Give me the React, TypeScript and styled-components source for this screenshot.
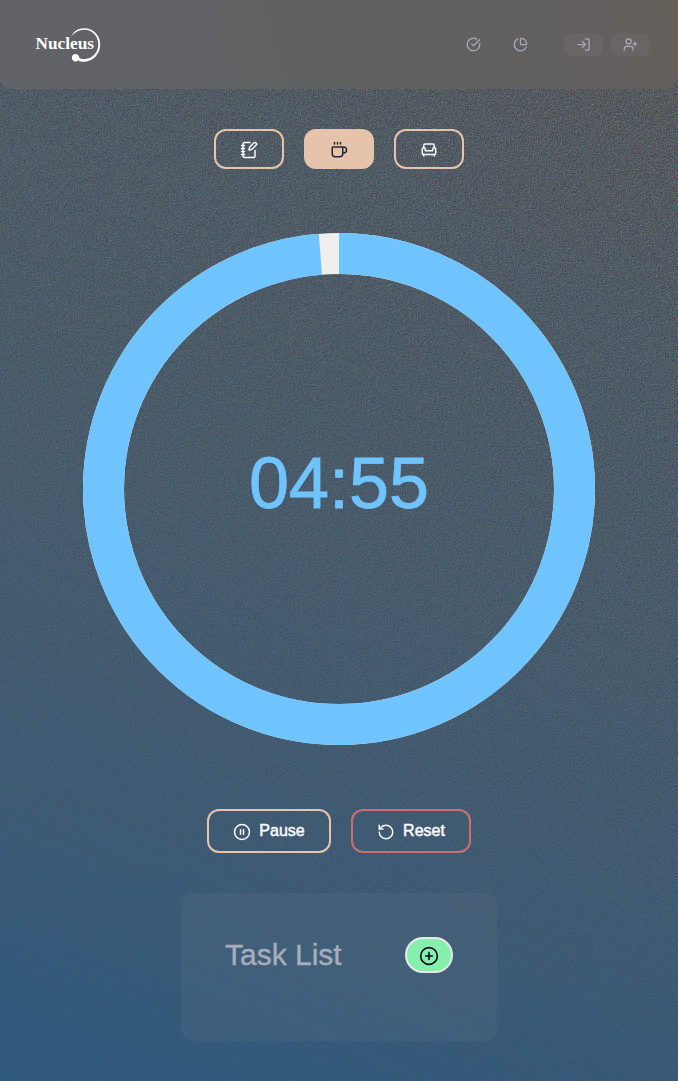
import React from "react";
import styled, { createGlobalStyle } from "styled-components";
import {
  Armchair, ChartPie, CircleCheckBig, CirclePause, CirclePlus,
  Coffee, LogIn, NotebookPen, RotateCcw, UserPlus,
} from "lucide-react";

const GlobalStyle = createGlobalStyle`
  *, *::before, *::after { box-sizing: border-box; }
  body { margin: 0; font-family: "Liberation Sans", Arial, sans-serif; background: #41586d; }
  button { font-family: inherit; padding: 0; cursor: pointer; }
`;

const Page = styled.div`
  position: relative;
  isolation: isolate;
  min-height: 100vh;
  overflow: hidden;
  display: flex;
  flex-direction: column;
  align-items: center;
  background:
    radial-gradient(circle at 100% 0%, rgba(112, 92, 76, 0.25), transparent 330px),
    linear-gradient(14deg, #2f5a7f 0%, #3d5c77 25%, #4a5f70 58%, #58626a 100%);
`;

const Grain = styled.svg`
  position: absolute;
  inset: 0;
  z-index: -1;
  width: 100%;
  height: 100%;
`;

const Header = styled.header`
  align-self: stretch;
  height: 89px;
  padding: 0 28px 0 30px;
  display: flex;
  align-items: center;
  justify-content: space-between;
  border-radius: 0 0 12px 12px;
  background: linear-gradient(75deg, #616368 0%, #616161 60%, #625f5d 92%, #665f5a 100%);
`;

const Logo = styled.svg`
  width: 76px;
  height: 44px;
  fill: #fff;
`;

const Nav = styled.nav`
  display: flex;
  align-items: center;
  color: #a5acbd;
`;

const NavLink = styled.a`
  display: flex;
  width: 47px;
  justify-content: center;
`;

const AuthButton = styled.button<{ $gap: number }>`
  display: flex;
  align-items: center;
  justify-content: center;
  width: 39px;
  height: 23px;
  margin-left: ${(p) => p.$gap}px;
  border: 0;
  border-radius: 8px;
  background: #6b6464;
  color: inherit;
`;

const Modes = styled.div`
  display: flex;
  gap: 20px;
  margin-top: 40px;
`;

const ModeButton = styled.button<{ $active?: boolean }>`
  display: flex;
  align-items: center;
  justify-content: center;
  width: 70px;
  height: 40px;
  padding-top: 1px;
  border: 2px solid #e6c4ab;
  border-radius: 12px;
  background: ${(p) => (p.$active ? "#e6c4ab" : "transparent")};
  color: ${(p) => (p.$active ? "#1f2937" : "#f9fafb")};
`;

const Timer = styled.div`
  display: grid;
  place-items: center;
  width: 512px;
  height: 512px;
  margin-top: 64px;
  > * { grid-area: 1 / 1; }
`;

const Time = styled.span`
  font-size: 72px;
  line-height: 72px;
  color: #6fc4ff;
  padding-bottom: 12px;
  -webkit-text-stroke: 0.8px currentColor;
`;

const Controls = styled.div`
  display: flex;
  gap: 20px;
  margin-top: 64px;
`;

const ControlButton = styled.button<{ $color: string; $width: number }>`
  display: flex;
  align-items: center;
  justify-content: center;
  gap: 8px;
  width: ${(p) => p.$width}px;
  height: 44px;
  border: 2px solid ${(p) => p.$color};
  border-radius: 12px;
  background: transparent;
  color: #f9fafb;
  font-size: 16px;
  line-height: 24px;
  -webkit-text-stroke: 0.5px currentColor;
  svg { margin-top: 2px; }
`;

const TaskCard = styled.section`
  display: flex;
  align-items: flex-start;
  justify-content: space-between;
  width: 316px;
  height: 148px;
  margin: 40px 0;
  padding: 44px;
  border-radius: 12px;
  background: rgba(112, 128, 144, 0.15);
`;

const TaskTitle = styled.h2`
  margin: 0;
  font-size: 30px;
  line-height: 36px;
  font-weight: 400;
  color: #a7adbd;
  -webkit-text-stroke: 0.4px currentColor;
`;

const AddButton = styled.button`
  display: flex;
  align-items: center;
  justify-content: center;
  width: 48px;
  height: 36px;
  padding-top: 2px;
  border: 2px solid #e5e7eb;
  border-radius: 18px;
  background: #86efac;
  color: #03101c;
`;

function Background() {
  return (
    <Grain aria-hidden="true">
      <defs>
        <filter id="grain" x="0" y="0" width="100%" height="100%" colorInterpolationFilters="sRGB">
          <feTurbulence type="fractalNoise" baseFrequency="0.75" numOctaves={3} />
          <feColorMatrix
            type="matrix"
            values="1.2 0.25 0.25 0 -0.54  0.25 1.2 0.25 0 -0.54  0.25 0.25 1.2 0 -0.53  0 0 0 0 1"
          />
        </filter>
        <linearGradient id="fade" x1="0.2" y1="1" x2="0.5" y2="0">
          <stop offset="0" stopColor="#fff" stopOpacity="0.02" />
          <stop offset="0.3" stopColor="#fff" stopOpacity="0.12" />
          <stop offset="0.65" stopColor="#fff" stopOpacity="0.24" />
          <stop offset="1" stopColor="#fff" stopOpacity="0.36" />
        </linearGradient>
        <mask id="grainMask" style={{ maskType: "alpha" }}>
          <rect width="110%" height="100%" fill="url(#fade)" />
        </mask>
      </defs>
      <g mask="url(#grainMask)">
        <rect width="110%" height="100%" filter="url(#grain)" />
      </g>
    </Grain>
  );
}

function NucleusLogo() {
  return (
    <Logo viewBox="0 0 76 44" role="img" aria-label="Nucleus">
      <text
        x="5.5" y="25.5" textLength="58.5" lengthAdjust="spacingAndGlyphs"
        fontFamily="Liberation Serif, serif" fontWeight="700" fontSize="17.5"
      >
        Nucleus
      </text>
      <path d="M41.5 13C44 8 48.500 5.300 54 5.300C63.500 5.300 70.200 12.500 70.200 21.500C70.200 31.500 62.500 38.800 53.500 38.800C51 38.800 49.500 38.300 48.300 37.200C47.500 38.100 46.500 38.500 45.500 38.500C43.300 38.500 41.800 36.800 41.800 34.800C41.800 32.500 43.500 31 45.500 31C47.500 31 49 32.400 49.200 34.500C50.500 35.900 52.500 36.300 55 36C62.500 35.500 68.300 29.500 68.300 21.500C68.300 13 62.500 6.700 54 6.700C49 6.700 45 9 41.500 13Z" />
    </Logo>
  );
}

function Ring() {
  const length = 2 * Math.PI * 235.5;
  const remaining = 0.987;
  return (
    <svg width="512" height="512" viewBox="0 0 512 512" fill="none" strokeWidth="41">
      <circle cx="256" cy="256" r="235.5" stroke="#f1efed" />
      <circle
        cx="256" cy="256" r="235.5" stroke="#6fc4ff"
        strokeDasharray={`${length * remaining} ${length}`}
        transform="rotate(-90 256 256)"
      />
    </svg>
  );
}

export default function App() {
  return (
    <>
      <GlobalStyle />
      <Page>
        <Background />
        <Header>
          <NucleusLogo />
          <Nav>
            <NavLink><CircleCheckBig size={15} strokeWidth={2} /></NavLink>
            <NavLink><ChartPie size={15} strokeWidth={2} /></NavLink>
            <AuthButton $gap={20} aria-label="Log in"><LogIn size={15} /></AuthButton>
            <AuthButton $gap={8} aria-label="Sign up"><UserPlus size={15} /></AuthButton>
          </Nav>
        </Header>
        <Modes>
          <ModeButton aria-label="Focus"><NotebookPen size={18} /></ModeButton>
          <ModeButton aria-label="Short break" $active><Coffee size={18} /></ModeButton>
          <ModeButton aria-label="Long break"><Armchair size={18} /></ModeButton>
        </Modes>
        <Timer>
          <Ring />
          <Time>04:55</Time>
        </Timer>
        <Controls>
          <ControlButton $color="#e6c4ab" $width={124}><CirclePause size={18} />Pause</ControlButton>
          <ControlButton $color="#c96f72" $width={120}><RotateCcw size={18} />Reset</ControlButton>
        </Controls>
        <TaskCard>
          <TaskTitle>Task List</TaskTitle>
          <AddButton aria-label="Add task"><CirclePlus size={20} /></AddButton>
        </TaskCard>
      </Page>
    </>
  );
}
